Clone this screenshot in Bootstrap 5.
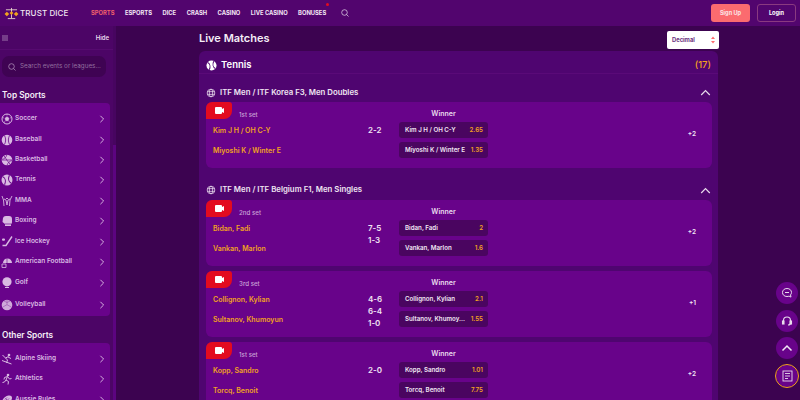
<!DOCTYPE html>
<html lang="en">
<head>
<meta charset="UTF-8">
<title>Trust Dice - Sports</title>
<link rel="stylesheet" href="https://cdn.jsdelivr.net/npm/bootstrap@5.3.3/dist/css/bootstrap.min.css">
<style>
    html, body { height: 400px; overflow: hidden; }
    body { background: #3c0350; color: #fff; font-family: "Inter", "Noto Sans", sans-serif; font-weight: 600; }
    .top-bar { height: 26px; background: #52056e; padding-left: 4px; padding-right: 4px; }
    .brand-text { font-size: 8px; letter-spacing: .1px; font-weight: 500; color: #f0e6f0; margin-left: 1px; width: 58px; white-space: nowrap; }
    .top-links { margin-left: 13px; gap: 10.5px; font-size: 5.8px; font-weight: 700; color: #f2e6f4; position: relative; }
    .top-links .on { color: #f0606c; }
    .dot-new { position: absolute; width: 3px; height: 3px; border-radius: 50%; background: #e30b1f; top: -6px; left: 235px; }
    .btn-sign { width: 39px; height: 18px; background: #fb6b6f; border-radius: 3px; font-size: 5.6px; font-weight: 700; color: #fbe3e6; }
    .btn-login { width: 39px; height: 18px; border: 1px solid #8a3a80; border-radius: 3px; font-size: 5.6px; font-weight: 700; color: #fff; margin-left: 7px; }
    .page-wrap { height: 374px; }
    .side-col { width: 113px; background: #4c0566; flex: none; }
    .side-track { width: 3px; background: #5c0480; flex: none; }
    .side-thumb { height: 119px; background: #470560; }
    .side-head { height: 24px; padding: 0 4px 0 2px; font-size: 6px; border-bottom: 1px solid #560a70; color: #eadcee; }
    .side-search { margin: 6px 7px 0 2px; height: 21px; background: #3f0353; border-radius: 7px; padding-left: 6px; font-size: 6.3px; font-weight: 400; color: #93709f; gap: 4px; }
    .side-title { font-size: 8.3px; margin: 11px 0 0 2px; height: 14px; line-height: 14px; color: #f5eef7; }
    .side-title.next { margin-top: 12px; }
    .side-list { background: #68038a; width: 110px; border-radius: 0 4px 4px 0; padding: 6px 0 0; margin-top: 1px; }
    .side-item { height: 20.4px; font-size: 6.5px; color: #d9b9e2; padding-left: 1px; padding-right: 4px; }
    .side-item.tall-item { height: 21.8px; }
    .side-item svg.sport { width: 12px; height: 12px; margin-right: 2px; flex: none; }
    .tennis-side { color: #d9b9e2; --cut: #68038a; }
    .tennis-head { color: #fff; --cut: #4f0570; }
    .main-col { padding-left: 83px; width: 602px; flex: none; }
    .main-title { height: 25px; width: 519px; font-size: 11px; color: #f5eef7; }
    .odds-select { width: 52px; height: 18px; background: #fff; border-radius: 2px; font-size: 5.8px; color: #6b2f80; padding: 0 4px 0 5px; font-weight: 700; margin: 3px -1px 0 0; }
    .sport-panel { width: 519px; background: #4f0570; border-radius: 6px 6px 0 0; }
    .panel-head { height: 23px; padding: 7px 7px 0; border-bottom: 1px solid #5a0a78; font-size: 9.5px; }
    .panel-count { color: #f2a21f; font-size: 9.5px; font-weight: 500; }
    .group-head { height: 28px; padding: 9px 7px 0; font-size: 7.8px; color: #f0e6f2; }
    .group-head.next { height: 27px; padding-top: 7px; }
    .match-box { margin: 0 6px 5px 7px; background: #68038a; border-radius: 6px; height: 66px; overflow: hidden; }
    .live-tag { width: 26px; height: 17px; background: #e30b1f; border-radius: 0 3px 8px 0; flex: none; }
    .set-label { font-size: 6.2px; font-weight: 500; color: #c9a2d6; margin-left: 7px; margin-top: 9px; line-height: 8px; }
    .left-side { width: 193px; flex: none; }
    .names-area { padding-left: 7px; margin-top: 5px; }
    .team-name { width: 155px; height: 20px; font-size: 7px; color: #f2a21f; line-height: 14px; }
    .score-col { font-size: 8px; line-height: 12px; color: #f1e4f3; }
    .market-col { width: 89px; flex: none; }
    .market-title { height: 20px; padding-top: 7px; font-size: 7px; line-height: 9px; text-align: center; color: #eadcee; }
    .odd-btn { height: 16px; margin-bottom: 4px; background: #4a0560; border-radius: 3px; padding: 0 5px 0 6px; font-size: 6.2px; color: #f2e8f4; }
    .odd-btn b { color: #f2a21f; font-weight: 600; margin-left: 3px; flex: none; }
    .odd-btn span { white-space: nowrap; }
    .more-col { flex: 1; font-size: 6.5px; color: #f2e8f4; padding-right: 16px; }
    .float-col { position: absolute; right: 2px; top: 282px; gap: 5.5px; }
    .float-btn { width: 22px; height: 22px; border-radius: 50%; background: #68038a; }
    .float-btn.ring { outline: 1px solid #f2a21f; }
</style>
</head>
<body>
<svg width="0" height="0" class="position-absolute">
    <defs>
        <symbol id="i-chev" viewBox="0 0 10 10"><path d="M3 1l4 4-4 4" fill="none" stroke="#d9b9e2" stroke-width="1.2"/></symbol>
        <symbol id="i-globe" viewBox="0 0 12 12"><g fill="none" stroke="#eadcee" stroke-width=".9"><circle cx="6" cy="6" r="4.6"/><ellipse cx="6" cy="6" rx="2" ry="4.6"/><path d="M1.4 4.4h9.2M1.4 7.6h9.2"/></g></symbol>
        <symbol id="i-up" viewBox="0 0 11 7"><path d="M1.2 6L5.5 1.700 9.800 6" fill="none" stroke="#e8dcec" stroke-width="1.200"/></symbol>
        <symbol id="i-cam" viewBox="0 0 26 17"><path d="M10 5h5a1 1 0 0 1 1 1v1l2-1v5l-2-1v1a1 1 0 0 1-1 1h-5a1 1 0 0 1-1-1V6a1 1 0 0 1 1-1z" fill="#fff"/></symbol>
        <symbol id="i-soccer" viewBox="0 0 12 12"><circle cx="6" cy="6" r="5" fill="none" stroke="#d9b9e2"/><path d="M6 3.800l2 1.500-.8 2.400H4.800L4 5.300zM6 1v1.500M1.500 4.500l1.500.5M10.500 4.500L9 5M3 10l1-1.800M9 10L8 8.200" fill="#d9b9e2" stroke="#d9b9e2" stroke-width=".6"/></symbol>
        <symbol id="i-base" viewBox="0 0 12 12"><circle cx="6" cy="6" r="5.300" fill="#d9b9e2"/><path d="M3.500 1.500c1.500 3 1.500 6 0 9M8.500 1.500c-1.500 3-1.500 6 0 9" fill="none" stroke="#68038a" stroke-width=".8"/></symbol>
        <symbol id="i-bask" viewBox="0 0 12 12"><circle cx="6" cy="6" r="5.300" fill="#d9b9e2"/><path d="M.7 6h10.600M6 .7c-1 3-3 4.500-5 4.500M6 11.300c1-3 3-4.500 5-4.500M3 1.800c2 3 4 6 6 8.400" fill="none" stroke="#68038a" stroke-width=".7"/></symbol>
        <symbol id="i-tennis" viewBox="0 0 12 12"><circle cx="6" cy="6" r="5.500" fill="currentColor"/><path d="M1.800 2.800C4.500 4 5 7.500 3.600 10.700M10.200 9.200C7.500 8 7 4.500 8.400 1.300" fill="none" stroke="var(--cut)" stroke-width="1.100"/></symbol>
        <symbol id="i-mma" viewBox="0 0 12 12"><path d="M1 1l1.500 4L3 11M11 1L9 5l-.5 6M3 4l2 1 1 5M9 4L7 5 6 10M5 3.500h2" fill="none" stroke="#d9b9e2" stroke-width=".9"/></symbol>
        <symbol id="i-box" viewBox="0 0 12 12"><path d="M2 3a3 2.500 0 0 1 3-2h3a3 3 0 0 1 3 3v3a2 2 0 0 1-1 2v2H4V9L1.500 7z" fill="#d9b9e2"/><path d="M4 9h6" stroke="#68038a" stroke-width=".7"/></symbol>
        <symbol id="i-hockey" viewBox="0 0 12 12"><path d="M11 .5L5 9.500H1.500" fill="none" stroke="#d9b9e2" stroke-width="1.400"/><rect x="1" y="2.500" width="3" height="2.200" rx="1" fill="#d9b9e2"/></symbol>
        <symbol id="i-foot" viewBox="0 0 12 12"><path d="M2 7a4.500 4.500 0 1 1 9 0z" fill="#d9b9e2"/><path d="M1 8h4v3.500H1z" fill="none" stroke="#d9b9e2" stroke-width=".8"/><path d="M6 2.500V7" stroke="#68038a" stroke-width=".6"/></symbol>
        <symbol id="i-golf" viewBox="0 0 12 12"><circle cx="6" cy="4.800" r="4.600" fill="#d9b9e2"/><path d="M4 10.500h4" stroke="#d9b9e2"/></symbol>
        <symbol id="i-volley" viewBox="0 0 12 12"><circle cx="6" cy="6" r="5.300" fill="#cfa9da"/><path d="M6 .7v5l4.500 2.500M6 5.700L1.500 8.200M3 2l3 1.500 3-1.500" fill="none" stroke="#8a3aa2" stroke-width=".5"/></symbol>
        <symbol id="i-ski" viewBox="0 0 12 12"><circle cx="8" cy="2" r="1.300" fill="#d9b9e2"/><path d="M7.500 3.500L4.500 5l2 2-1 3M1 7.500l9.500 3.500M7 4l3 1.500M1.500 2L4.500 5" fill="none" stroke="#d9b9e2"/></symbol>
        <symbol id="i-run" viewBox="0 0 12 12"><circle cx="7" cy="2" r="1.300" fill="#d9b9e2"/><path d="M6.500 3.500L5 7l2.500 1.500L7 11.500M5 7L3.500 9 1.500 9.500M6.500 3.500L3.500 4.500 3 6.500M6.500 3.500L8.500 6l2-.5" fill="none" stroke="#d9b9e2"/></symbol>
        <symbol id="i-aussie" viewBox="0 0 12 12"><ellipse cx="6" cy="6" rx="5.800" ry="3.500" transform="rotate(-40 6 6)" fill="#d9b9e2"/><path d="M4.500 4.500l3 3M6 3.500L4 5.500M8 4.500L5.500 7" stroke="#68038a" stroke-width=".6"/></symbol>
    </defs>
</svg>

<header class="top-bar d-flex align-items-center">
    <svg width="15" height="13" viewBox="0 0 16 14"><g fill="none" stroke="#f4e4d4" stroke-width=".9"><path d="M8 1v11M4 12.500h8M2 3h12"/></g><path d="M3 5l2.500 2.500L3 10 .5 7.500zM13 5l2.500 2.500L13 10l-2.500-2.500z" fill="#f2a21f"/><path d="M8 4.500l2 2-2 2-2-2z" fill="#f2a21f"/></svg>
    <div class="brand-text">TRUST DICE</div>
    <nav class="top-links d-flex align-items-center">
        <span class="on">SPORTS</span>
        <span>ESPORTS</span>
        <span>DICE</span>
        <span>CRASH</span>
        <span>CASINO</span>
        <span>LIVE CASINO</span>
        <span>BONUSES</span>
        <i class="dot-new"></i>
        <svg width="8" height="8" viewBox="0 0 8 8" class="ms-1"><circle cx="3.500" cy="3.500" r="2.800" fill="none" stroke="#e8dcec" stroke-width=".7"/><path d="M5.500 5.500L7.500 7.500" stroke="#e8dcec" stroke-width=".7"/></svg>
    </nav>
    <div class="btn-sign d-flex align-items-center justify-content-center ms-auto">Sign Up</div>
    <div class="btn-login d-flex align-items-center justify-content-center">Login</div>
</header>

<div class="page-wrap d-flex overflow-hidden">
    <aside class="side-col overflow-hidden">
        <div class="side-head d-flex align-items-center justify-content-between">
            <svg width="6" height="6" viewBox="0 0 6 6"><path d="M0 1h6M0 3h6M0 5h6" stroke="#a884b4" stroke-width=".9"/></svg>
            <span>Hide</span>
        </div>
        <div class="side-search d-flex align-items-center">
            <svg width="8" height="8" viewBox="0 0 8 8"><circle cx="3.500" cy="3.500" r="2.800" fill="none" stroke="#b79ac2" stroke-width=".7"/><path d="M5.500 5.500L7.500 7.500" stroke="#b79ac2" stroke-width=".7"/></svg>
            <span>Search events or leagues...</span>
        </div>
        <div class="side-title">Top Sports</div>
        <div class="side-list">
            <div class="side-item d-flex align-items-center"><svg class="sport"><use href="#i-soccer"/></svg>Soccer<svg class="ms-auto" width="8" height="8"><use href="#i-chev"/></svg></div>
            <div class="side-item d-flex align-items-center"><svg class="sport"><use href="#i-base"/></svg>Baseball<svg class="ms-auto" width="8" height="8"><use href="#i-chev"/></svg></div>
            <div class="side-item d-flex align-items-center"><svg class="sport"><use href="#i-bask"/></svg>Basketball<svg class="ms-auto" width="8" height="8"><use href="#i-chev"/></svg></div>
            <div class="side-item d-flex align-items-center"><svg class="sport tennis-side"><use href="#i-tennis"/></svg>Tennis<svg class="ms-auto" width="8" height="8"><use href="#i-chev"/></svg></div>
            <div class="side-item d-flex align-items-center"><svg class="sport"><use href="#i-mma"/></svg>MMA<svg class="ms-auto" width="8" height="8"><use href="#i-chev"/></svg></div>
            <div class="side-item d-flex align-items-center"><svg class="sport"><use href="#i-box"/></svg>Boxing<svg class="ms-auto" width="8" height="8"><use href="#i-chev"/></svg></div>
            <div class="side-item d-flex align-items-center"><svg class="sport"><use href="#i-hockey"/></svg>Ice Hockey<svg class="ms-auto" width="8" height="8"><use href="#i-chev"/></svg></div>
            <div class="side-item d-flex align-items-center"><svg class="sport"><use href="#i-foot"/></svg>American Football<svg class="ms-auto" width="8" height="8"><use href="#i-chev"/></svg></div>
            <div class="side-item tall-item d-flex align-items-center"><svg class="sport"><use href="#i-golf"/></svg>Golf<svg class="ms-auto" width="8" height="8"><use href="#i-chev"/></svg></div>
            <div class="side-item tall-item d-flex align-items-center"><svg class="sport"><use href="#i-volley"/></svg>Volleyball<svg class="ms-auto" width="8" height="8"><use href="#i-chev"/></svg></div>
        </div>
        <div class="side-title next">Other Sports</div>
        <div class="side-list">
            <div class="side-item d-flex align-items-center"><svg class="sport"><use href="#i-ski"/></svg>Alpine Skiing<svg class="ms-auto" width="8" height="8"><use href="#i-chev"/></svg></div>
            <div class="side-item d-flex align-items-center"><svg class="sport"><use href="#i-run"/></svg>Athletics<svg class="ms-auto" width="8" height="8"><use href="#i-chev"/></svg></div>
            <div class="side-item d-flex align-items-center"><svg class="sport"><use href="#i-aussie"/></svg>Aussie Rules<svg class="ms-auto" width="8" height="8"><use href="#i-chev"/></svg></div>
        </div>
    </aside>
    <div class="side-track"><div class="side-thumb"></div></div>
    <main class="main-col">
        <div class="main-title d-flex align-items-center justify-content-between">
            <span>Live Matches</span>
            <div class="odds-select d-flex align-items-center justify-content-between">
                <span>Decimal</span>
                <svg width="4" height="8" viewBox="0 0 4 8"><path d="M2 .5L4 3H0zM2 7.500L0 5h4z" fill="#fb6b6f"/></svg>
            </div>
        </div>
        <section class="sport-panel">
            <div class="panel-head d-flex align-items-center justify-content-between">
                <span class="d-flex align-items-center gap-1"><svg width="11" height="11" class="tennis-head"><use href="#i-tennis"/></svg>Tennis</span>
                <span class="panel-count">(17)</span>
            </div>

            <div class="group-head d-flex align-items-center justify-content-between">
                <span class="d-flex align-items-center gap-1"><svg width="10" height="10"><use href="#i-globe"/></svg>ITF Men / ITF Korea F3, Men Doubles</span>
                <svg width="11" height="7"><use href="#i-up"/></svg>
            </div>
            <div class="match-box d-flex">
                <div class="left-side">
                    <div class="d-flex"><svg class="live-tag"><use href="#i-cam"/></svg><span class="set-label">1st set</span></div>
                    <div class="names-area d-flex">
                        <div><div class="team-name">Kim J H / OH C-Y</div><div class="team-name">Miyoshi K / Winter E</div></div>
                        <div class="score-col"><div>2-2</div></div>
                    </div>
                </div>
                <div class="market-col">
                    <div class="market-title">Winner</div>
                    <div class="odd-btn d-flex align-items-center justify-content-between"><span>Kim J H / OH C-Y</span><b>2.65</b></div>
                    <div class="odd-btn d-flex align-items-center justify-content-between"><span>Miyoshi K / Winter E</span><b>1.35</b></div>
                </div>
                <div class="more-col d-flex align-items-center justify-content-end">+2</div>
            </div>

            <div class="group-head next d-flex align-items-center justify-content-between">
                <span class="d-flex align-items-center gap-1"><svg width="10" height="10"><use href="#i-globe"/></svg>ITF Men / ITF Belgium F1, Men Singles</span>
                <svg width="11" height="7"><use href="#i-up"/></svg>
            </div>
            <div class="match-box d-flex">
                <div class="left-side">
                    <div class="d-flex"><svg class="live-tag"><use href="#i-cam"/></svg><span class="set-label">2nd set</span></div>
                    <div class="names-area d-flex">
                        <div><div class="team-name">Bidan, Fadi</div><div class="team-name">Vankan, Marlon</div></div>
                        <div class="score-col"><div>7-5</div><div>1-3</div></div>
                    </div>
                </div>
                <div class="market-col">
                    <div class="market-title">Winner</div>
                    <div class="odd-btn d-flex align-items-center justify-content-between"><span>Bidan, Fadi</span><b>2</b></div>
                    <div class="odd-btn d-flex align-items-center justify-content-between"><span>Vankan, Marlon</span><b>1.6</b></div>
                </div>
                <div class="more-col d-flex align-items-center justify-content-end">+2</div>
            </div>
            <div class="match-box d-flex">
                <div class="left-side">
                    <div class="d-flex"><svg class="live-tag"><use href="#i-cam"/></svg><span class="set-label">3rd set</span></div>
                    <div class="names-area d-flex">
                        <div><div class="team-name">Collignon, Kylian</div><div class="team-name">Sultanov, Khumoyun</div></div>
                        <div class="score-col"><div>4-6</div><div>6-4</div><div>1-0</div></div>
                    </div>
                </div>
                <div class="market-col">
                    <div class="market-title">Winner</div>
                    <div class="odd-btn d-flex align-items-center justify-content-between"><span>Collignon, Kylian</span><b>2.1</b></div>
                    <div class="odd-btn d-flex align-items-center justify-content-between"><span>Sultanov, Khumoy...</span><b>1.55</b></div>
                </div>
                <div class="more-col d-flex align-items-center justify-content-end">+1</div>
            </div>
            <div class="match-box d-flex">
                <div class="left-side">
                    <div class="d-flex"><svg class="live-tag"><use href="#i-cam"/></svg><span class="set-label">1st set</span></div>
                    <div class="names-area d-flex">
                        <div><div class="team-name">Kopp, Sandro</div><div class="team-name">Torcq, Benoit</div></div>
                        <div class="score-col"><div>2-0</div></div>
                    </div>
                </div>
                <div class="market-col">
                    <div class="market-title">Winner</div>
                    <div class="odd-btn d-flex align-items-center justify-content-between"><span>Kopp, Sandro</span><b>1.01</b></div>
                    <div class="odd-btn d-flex align-items-center justify-content-between"><span>Torcq, Benoit</span><b>7.75</b></div>
                </div>
                <div class="more-col d-flex align-items-center justify-content-end">+2</div>
            </div>
        </section>
    </main>
</div>

<div class="float-col d-flex flex-column">
    <div class="float-btn d-flex align-items-center justify-content-center"><svg width="12" height="12" viewBox="0 0 12 12" fill="none" stroke="#e8dcec"><path d="M6 1.500c-2.800 0-4.500 1.800-4.500 4s1.700 4 4.500 4c.8 0 1.500-.1 2-.4l2 1-.5-2.200c.6-.7 1-1.500 1-2.400 0-2.200-1.700-4-4.500-4zM4 5.500h4"/></svg></div>
    <div class="float-btn d-flex align-items-center justify-content-center"><svg width="12" height="12" viewBox="0 0 12 12" fill="none" stroke="#e8dcec" stroke-width="1.100"><path d="M2.500 7V5.500a3.500 3.500 0 0 1 7 0V8c0 1.200-1 2-2.500 2"/><rect x="1.500" y="6" width="1.500" height="3" fill="#e8dcec"/><rect x="9" y="6" width="1.500" height="3" fill="#e8dcec"/></svg></div>
    <div class="float-btn d-flex align-items-center justify-content-center"><svg width="12" height="8" viewBox="0 0 12 8" fill="none" stroke="#f2e8f4" stroke-width="1.500"><path d="M1.500 6.500L6 2l4.500 4.500"/></svg></div>
    <div class="float-btn ring d-flex align-items-center justify-content-center"><svg width="11" height="12" viewBox="0 0 11 12" fill="none" stroke="#e8dcec" stroke-width=".9"><rect x="1" y="1" width="9" height="10"/><path d="M3 3.500h5M3 6h5M3 8.500h3"/></svg></div>
</div>
<script src="https://cdn.jsdelivr.net/npm/bootstrap@5.3.3/dist/js/bootstrap.bundle.min.js"></script>
</body>
</html>
